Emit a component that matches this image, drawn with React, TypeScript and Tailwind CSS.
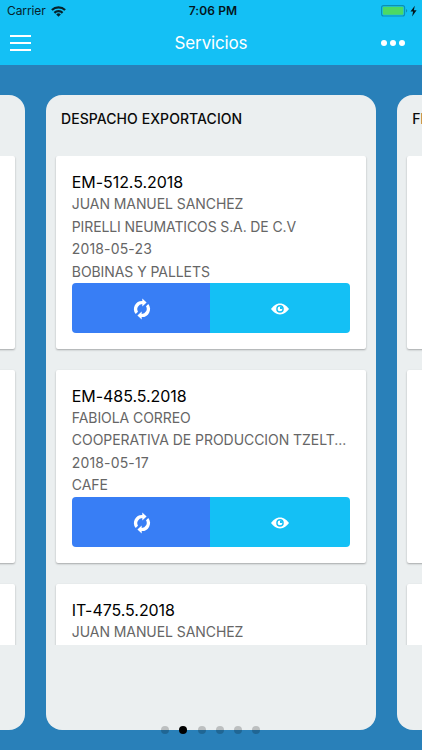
import React from "react";

type Service = {
  code: string;
  person: string;
  company: string;
  date: string;
  cargo: string;
};

type Column = { title: string; services: Service[] };

const blank: Service = { code: "", person: "", company: "", date: "", cargo: "" };

const columns: Column[] = [
  { title: "", services: [blank, blank, blank] },
  {
    title: "DESPACHO EXPORTACION",
    services: [
      {
        code: "EM-512.5.2018",
        person: "JUAN MANUEL SANCHEZ",
        company: "PIRELLI NEUMATICOS S.A. DE C.V",
        date: "2018-05-23",
        cargo: "BOBINAS Y PALLETS",
      },
      {
        code: "EM-485.5.2018",
        person: "FABIOLA CORREO",
        company: "COOPERATIVA DE PRODUCCION TZELT...",
        date: "2018-05-17",
        cargo: "CAFE",
      },
      { ...blank, code: "IT-475.5.2018", person: "JUAN MANUEL SANCHEZ" },
    ],
  },
  { title: "FI", services: [blank, blank, blank] },
];

function WifiIcon() {
  return (
    <svg className="h-[11px] w-[15px]" viewBox="0 0 15 11" fill="none" stroke="#06222b" strokeWidth="2.2">
      <path d="M.9 4.1a9.3 9.3 0 0 1 13.2 0" />
      <path d="M3.4 6.9a5.8 5.8 0 0 1 8.2 0" />
      <path d="M7.5 10.8 5.2 8.4a3.3 3.3 0 0 1 4.6 0z" fill="#06222b" stroke="none" />
    </svg>
  );
}

function SyncIcon() {
  return (
    <svg className="ml-[2px] mt-[2px] h-[22px] w-[18px]" viewBox="0 0 18 22" fill="white">
      <path d="M9.3.6v2.3A8.1 8.1 0 0 0 2.700 16l2.300-2.300A5 5 0 0 1 9.300 6.100v2.500L13.600 4.600z" />
      <path d="M8.700 21.400v-2.300A8.100 8.100 0 0 0 15.300 6l-2.300 2.300A5 5 0 0 1 8.700 15.900v-2.500L4.400 17.400z" />
    </svg>
  );
}

function EyeIcon() {
  return (
    <svg className="mt-[2px] h-3 w-[18px]" viewBox="0 0 18 12">
      <path d="M9 .4C5 .4 2.100 3 0 6 2.100 9 5 11.400 9 11.400S15.900 9 18 6C15.900 3 13 .4 9 .4z" fill="white" />
      <circle cx="9" cy="5.900" r="3.100" fill="none" stroke="#14c0f5" strokeWidth="1.400" />
      <path d="M9 3.600v2.500h2.500A2.500 2.500 0 0 0 9 3.600z" fill="#14c0f5" />
    </svg>
  );
}

function Card({ service }: { service: Service }) {
  return (
    <article className="mb-[20.500px] h-[193.300px] shrink-0 rounded-[2px] bg-white px-4 pt-[15.200px] shadow-[0_1px_2px_rgba(0,0,0,0.3)]">
      <h2 className="h-[22px] text-[16px] leading-[22px] tracking-[-0.06px] text-black">{service.code}</h2>
      <div className="h-[90px] whitespace-nowrap text-[14px] leading-[22.500px] tracking-[-0.07px] text-[#666]">
        <p className="h-[22.500px]">{service.person}</p>
        <p className={service.company.length > 32 ? "h-[22.500px] tracking-[-0.05px]" : "h-[22.500px] tracking-[-0.12px]"}>
          {service.company}
        </p>
        <p className="h-[22.500px] tracking-[0.15px]">{service.date}</p>
        <p className="h-[22.500px]">{service.cargo}</p>
      </div>
      {service.date && (
        <div className="flex h-[50px] overflow-hidden rounded-[4px]">
          <button className="flex w-[138.500px] items-center justify-center bg-[#387ef5]" aria-label="Actualizar">
            <SyncIcon />
          </button>
          <button className="flex flex-1 items-center justify-center bg-[#14c0f5]" aria-label="Ver">
            <EyeIcon />
          </button>
        </div>
      )}
    </article>
  );
}

export default function App() {
  return (
    <div className="relative flex h-[750px] w-[422px] flex-col overflow-hidden bg-[#2980b9] font-['Inter','Liberation_Sans',sans-serif]">
      <header className="h-[65px] shrink-0 bg-[#14c0f5]">
        <div className="grid h-[22px] grid-cols-3 items-center pl-[7px] pr-[5px] text-[12px] text-[#06222b]">
          <div className="flex items-center gap-[5px]">
            <span className="tracking-[-0.1px]">Carrier</span>
            <WifiIcon />
          </div>
          <span className="pl-[2px] text-center font-semibold tracking-[0.1px] text-[#04161c]">7:06 PM</span>
          <div className="flex items-center justify-end">
            <svg className="h-3 w-9" viewBox="0 0 36 12">
              <rect x=".6" y=".6" width="23" height="10.400" rx="2" fill="none" stroke="#0c8fb5" strokeWidth="1.100" />
              <rect x="1.800" y="1.800" width="20.600" height="8" rx="1" fill="#4cd964" />
              <path d="M25 4v3.600q1.200-.5 1.200-1.800T25 4z" fill="#0c8fb5" />
              <path d="M33.800.8 29.500 6.600h2.600l-1 4.800 4.500-6.200h-2.700z" fill="#04161c" />
            </svg>
          </div>
        </div>
        <div className="grid h-[42px] grid-cols-3 items-center px-[10px] text-white">
          <div className="flex w-[21px] flex-col gap-[5px]">
            <span className="h-[2px] bg-white" />
            <span className="h-[2px] bg-white" />
            <span className="h-[2px] bg-white" />
          </div>
          <h1 className="pt-[2px] text-center text-[17px] tracking-[-0.15px]">Servicios</h1>
          <div className="flex justify-end gap-[3px] pr-[7px]">
            <span className="size-[6px] rounded-full bg-white" />
            <span className="size-[6px] rounded-full bg-white" />
            <span className="size-[6px] rounded-full bg-white" />
          </div>
        </div>
      </header>
      <main className="-ml-[305.700px] flex w-[1040px] gap-[20.700px] pt-[30px]">
        {columns.map((column, index) => (
          <section key={index} className="h-[635px] w-[330.500px] shrink-0 overflow-hidden rounded-[16px] bg-[#ebeff0]">
            <h3 className="h-[61px] whitespace-nowrap pl-[15.500px] pt-3 text-[14px] font-medium leading-[23px] tracking-[0.07px] text-[#0a0a0a]">
              {column.title}
            </h3>
            <div className="flex h-[489px] flex-col overflow-hidden px-[10.300px]">
              {column.services.map((service, i) => (
                <Card key={i} service={service} />
              ))}
            </div>
          </section>
        ))}
      </main>
      <nav className="absolute left-[161px] top-[726px] flex gap-[10.300px]">
        {[0, 1, 2, 3, 4, 5].map((dot) => (
          <span key={dot} className={dot === 1 ? "size-2 rounded-full bg-black" : "size-2 rounded-full bg-black/20"} />
        ))}
      </nav>
    </div>
  );
}
